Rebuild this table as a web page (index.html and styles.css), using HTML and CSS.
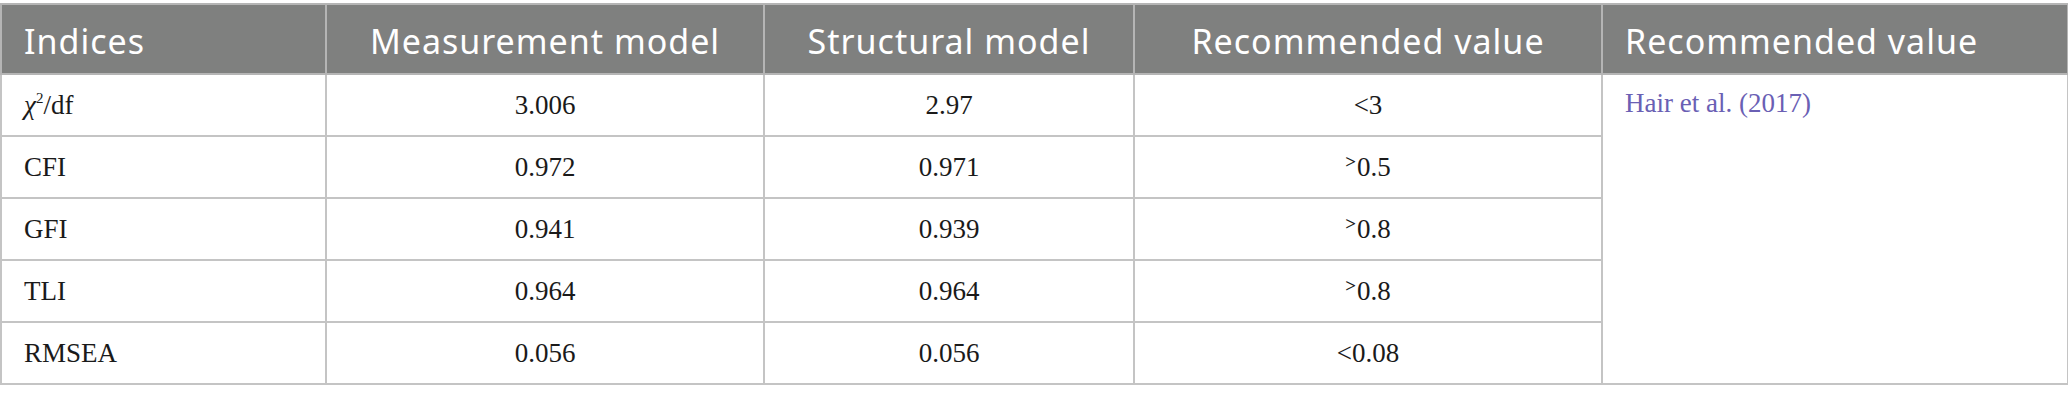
FILE: index.html
```html
<!DOCTYPE html>
<html lang="en">
<head>
  <meta charset="UTF-8">
  <title>Fit indices</title>
  <link rel="stylesheet" href="styles.css">
</head>
<body>

  <table class="fit-table">
    <colgroup>
      <col class="c1">
      <col class="c2">
      <col class="c3">
      <col class="c4">
      <col class="c5">
    </colgroup>
    <thead>
      <tr>
        <th class="left">Indices</th>
        <th>Measurement model</th>
        <th>Structural model</th>
        <th>Recommended value</th>
        <th class="left">Recommended value</th>
      </tr>
    </thead>
    <tbody>
      <tr>
        <td class="left"><i>χ</i><sup>2</sup>/df</td>
        <td>3.006</td>
        <td>2.97</td>
        <td>&lt;3</td>
        <td class="left ref" rowspan="5"><a href="#">Hair et al. (2017)</a></td>
      </tr>
      <tr>
        <td class="left">CFI</td>
        <td>0.972</td>
        <td>0.971</td>
        <td><span class="gt">˃</span>0.5</td>
      </tr>
      <tr>
        <td class="left">GFI</td>
        <td>0.941</td>
        <td>0.939</td>
        <td><span class="gt">˃</span>0.8</td>
      </tr>
      <tr>
        <td class="left">TLI</td>
        <td>0.964</td>
        <td>0.964</td>
        <td><span class="gt">˃</span>0.8</td>
      </tr>
      <tr>
        <td class="left">RMSEA</td>
        <td>0.056</td>
        <td>0.056</td>
        <td>&lt;0.08</td>
      </tr>
    </tbody>
  </table>

</body>
</html>
```

FILE: styles.css
```css
* {
  box-sizing: border-box;
}

body {
  margin: 0;
  padding: 3px 0 0 0;
  background: #fff;
}

.fit-table {
  width: 2067px;
  border-collapse: collapse;
  table-layout: fixed;
  font-family: "Liberation Serif", "DejaVu Serif", serif;
  font-size: 27px;
  color: #1a1a1a;
}

.c1 { width: 325px; }
.c2 { width: 438px; }
.c3 { width: 370px; }
.c4 { width: 468px; }
.c5 { width: 466px; }

.fit-table th,
.fit-table td {
  border: 2px solid #c4c4c4;
  text-align: center;
  padding: 0 22px;
}

.fit-table th {
  height: 70px;
  background: #7f807f;
  color: #fff;
  font-family: "Noto Sans", "Open Sans", sans-serif;
  font-weight: 400;
  font-size: 34px;
  letter-spacing: 1px;
  padding-top: 4px;
  border-color: #b5b5b5;
}

.fit-table td {
  height: 62px;
  vertical-align: middle;
}

.fit-table .left {
  text-align: left;
}

.fit-table sup {
  font-size: 15px;
  vertical-align: 11px;
  line-height: 0;
}

.gt {
  font-size: 19px;
  font-weight: bold;
  vertical-align: 8px;
  line-height: 0;
  margin-right: 1px;
}

.fit-table .ref {
  vertical-align: top;
  padding-top: 13px;
}

.ref a {
  color: #6a60b4;
  text-decoration: none;
}
```
